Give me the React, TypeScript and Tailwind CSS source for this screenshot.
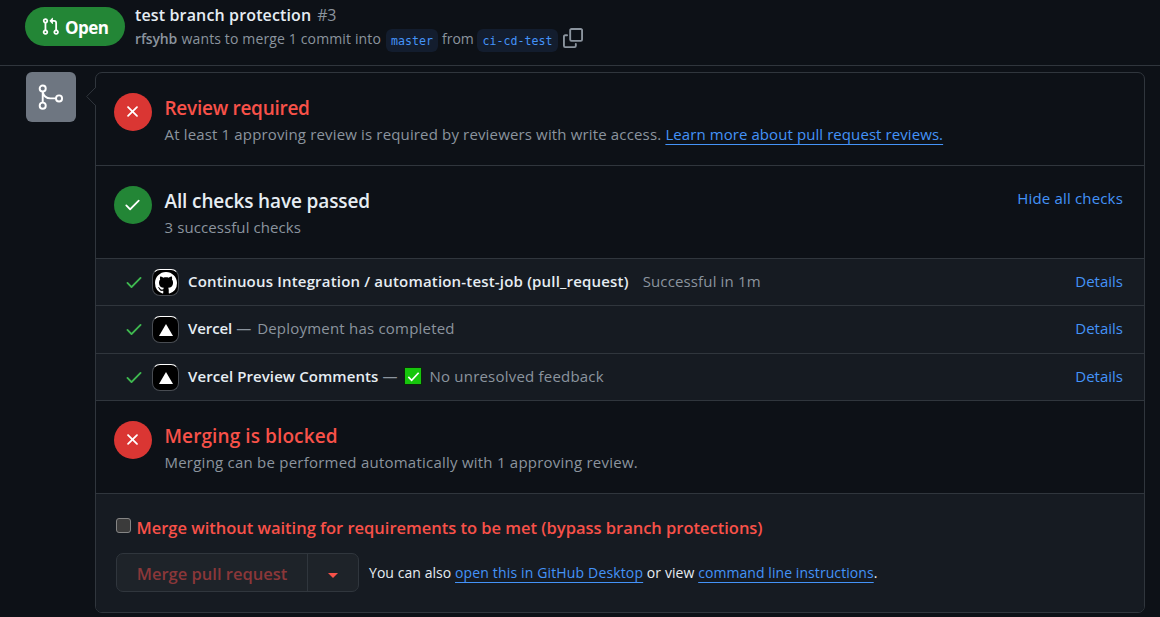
import type { ReactNode } from "react";

const CHECK =
  "M13.78 4.22a.75.75 0 0 1 0 1.06l-7.25 7.25a.75.75 0 0 1-1.06 0L2.22 9.28a.751.751 0 0 1 .018-1.042.751.751 0 0 1 1.042-.018L6 10.94l6.72-6.72a.75.75 0 0 1 1.06 0Z";
const CROSS =
  "M3.72 3.72a.75.75 0 0 1 1.06 0L8 6.94l3.22-3.22a.749.749 0 0 1 1.275.326.749.749 0 0 1-.215.734L9.06 8l3.22 3.22a.749.749 0 0 1-.326 1.275.749.749 0 0 1-.734-.215L8 9.06l-3.22 3.22a.751.751 0 0 1-1.042-.018.751.751 0 0 1-.018-1.042L6.94 8 3.72 4.78a.75.75 0 0 1 0-1.06Z";
const PULL_REQUEST =
  "M1.5 3.25a2.25 2.25 0 1 1 3 2.122v5.256a2.251 2.251 0 1 1-1.5 0V5.372A2.25 2.25 0 0 1 1.5 3.25Zm5.677-.177L9.573.677A.25.25 0 0 1 10 .854V2.5h1A2.5 2.5 0 0 1 13.5 5v5.628a2.251 2.251 0 1 1-1.5 0V5a1 1 0 0 0-1-1h-1v1.646a.25.25 0 0 1-.427.177L7.177 3.427a.25.25 0 0 1 0-.354ZM3.75 2.5a.75.75 0 1 0 0 1.5.75.75 0 0 0 0-1.5Zm0 9.5a.75.75 0 1 0 0 1.5.75.75 0 0 0 0-1.5Zm8.25.75a.75.75 0 1 0 1.5 0 .75.75 0 0 0-1.5 0Z";
const COPY =
  "M0 6.75C0 5.784.784 5 1.75 5h1.5a.75.75 0 0 1 0 1.5h-1.5a.25.25 0 0 0-.25.25v7.5c0 .138.112.25.25.25h7.5a.25.25 0 0 0 .25-.25v-1.5a.75.75 0 0 1 1.5 0v1.5A1.75 1.75 0 0 1 9.25 16h-7.5A1.75 1.75 0 0 1 0 14.25Z M5 1.75C5 .784 5.784 0 6.75 0h7.5C15.216 0 16 .784 16 1.75v7.5A1.75 1.75 0 0 1 14.25 11h-7.5A1.75 1.75 0 0 1 5 9.25Zm1.75-.25a.25.25 0 0 0-.25.25v7.5c0 .138.112.25.25.25h7.5a.25.25 0 0 0 .25-.25v-7.5a.25.25 0 0 0-.25-.25Z";
const OCTOCAT =
  "M8 0c4.42 0 8 3.58 8 8a8.013 8.013 0 0 1-5.45 7.59c-.4.08-.55-.17-.55-.38 0-.27.01-1.13.01-2.2 0-.75-.25-1.23-.54-1.48 1.78-.2 3.65-.88 3.65-3.95 0-.88-.31-1.59-.82-2.15.08-.2.36-1.02-.08-2.12 0 0-.67-.22-2.2.82-.64-.18-1.32-.27-2-.27-.68 0-1.36.09-2 .27-1.53-1.03-2.2-.82-2.2-.82-.44 1.1-.16 1.92-.08 2.12-.51.56-.82 1.28-.82 2.15 0 3.06 1.86 3.75 3.64 3.95-.23.2-.44.55-.51 1.07-.46.21-1.61.55-2.33-.66-.15-.24-.6-.83-1.23-.82-.67.01-.27.38.01.53.34.19.73.9.82 1.13.16.45.68 1.31 2.69.94 0 .67.01 1.3.01 1.49 0 .21-.15.45-.55.38A7.995 7.995 0 0 1 0 8c0-4.42 3.58-8 8-8Z";

function Icon({ d, className }: { d: string; className: string }) {
  return (
    <svg viewBox="0 0 16 16" fill="currentColor" className={`block shrink-0 ${className}`}>
      <path d={d} />
    </svg>
  );
}

function Link({ children, className = "" }: { children: ReactNode; className?: string }) {
  return (
    <a
      href="#"
      className={`text-[#4493f8] underline decoration-1 underline-offset-[4px] [text-decoration-skip-ink:none] ${className}`}
    >
      {children}
    </a>
  );
}

function Branch({ name, width }: { name: string; width: string }) {
  return (
    <span
      className={`ml-[4px] flex h-[23px] items-center justify-center rounded-[6px] bg-[#131d2e] font-['DejaVu_Sans_Mono',monospace] text-[11.6px] text-[#4493f8] ${width}`}
    >
      {name}
    </span>
  );
}

function StatusSection({
  ok = false,
  title,
  titleClass,
  children,
  action,
}: {
  ok?: boolean;
  title: string;
  titleClass: string;
  children: ReactNode;
  action?: ReactNode;
}) {
  return (
    <section className="flex h-[93px] items-start border-b border-[#30363d] pr-[21px] pl-[18px]">
      <span
        className={`mt-5 flex size-[38px] shrink-0 items-center justify-center rounded-full pr-px pb-px text-white ${ok ? "bg-[#238636]" : "bg-[#da3633]"}`}
      >
        <Icon d={ok ? CHECK : CROSS} className="size-[19px]" />
      </span>
      <div className="mt-[23px] ml-[12.5px] flex grow flex-col gap-[2px]">
        <h3 className={`text-[19px] leading-6 font-semibold ${titleClass}`}>{title}</h3>
        <p className="text-[15px] leading-6 text-[#8b949e]">{children}</p>
      </div>
      {action}
    </section>
  );
}

function CheckRow({ height, github = false, children }: { height: string; github?: boolean; children: ReactNode }) {
  return (
    <div className={`flex items-start border-b border-[#30363d] bg-[#161b22] pr-[21px] pl-[28px] ${height}`}>
      <Icon d={CHECK} className="mt-[13px] size-[20px] text-[#3fb950]" />
      <span className="mt-[10px] ml-2 flex size-[27px] shrink-0 items-center justify-center overflow-hidden rounded-[8px] border border-[#484c52] border-t-white bg-black text-white">
        {github ? (
          <Icon d={OCTOCAT} className="mt-px size-[22px]" />
        ) : (
          <svg viewBox="0 0 14 12" className="block h-[12px] w-[14px]" fill="currentColor">
            <path d="M7 0 14 12H0Z" />
          </svg>
        )}
      </span>
      <div className="mt-[10px] ml-[9px] flex grow items-baseline text-[15px] leading-6 whitespace-pre text-[#8b949e]">
        {children}
      </div>
      <a href="#" className="mt-[10px] text-[15px] leading-6 text-[#4493f8]">
        Details
      </a>
    </div>
  );
}

export default function App() {
  return (
    <div className="h-[617px] w-[1160px] overflow-hidden bg-[#0d1117] font-['Open_Sans','Noto_Sans',sans-serif] text-[#e6edf3]">
      <header className="flex h-[66px] items-start border-b border-[#30363d] pl-[25px]">
        <div className="mt-[7px] flex h-[39px] w-[100px] shrink-0 items-center rounded-full bg-[#238636] pl-4 text-white">
          <Icon d={PULL_REQUEST} className="size-[19px]" />
          <span className="mt-[3px] ml-[5px] text-[17px] leading-6 font-bold tracking-[-0.5px]">Open</span>
        </div>
        <div className="mt-[5px] ml-[10px] flex flex-col">
          <div className="flex h-5 items-baseline gap-[6px] text-[16px] leading-5">
            <h1 className="font-semibold tracking-[0.14px]">test branch protection</h1>
            <span className="tracking-[-0.5px] text-[#8b949e]">#3</span>
          </div>
          <div className="mt-[4px] flex items-start text-[14px] leading-5 whitespace-nowrap text-[#8b949e]">
            <span className="w-[46.5px] font-semibold tracking-[-0.15px]">rfsyhb</span>
            <span className="w-[200.5px] tracking-[0.14px]">wants to merge 1 commit into</span>
            <Branch name="master" width="w-[52px]" />
            <span className="ml-[4px] w-[31px]">from</span>
            <Branch name="ci-cd-test" width="w-[81px]" />
            <Icon d={COPY} className="-mt-px ml-[5px] size-5" />
          </div>
        </div>
      </header>

      <main className="flex items-start pt-[6px] pl-[26px]">
        <div className="flex size-[50px] shrink-0 items-center justify-center rounded-[6px] bg-[#6e7681] text-white">
          <svg viewBox="0 0 24 24" className="size-[28px]" fill="none" stroke="currentColor" strokeWidth="1.65">
            <circle cx="4.9" cy="4.75" r="2.6" />
            <circle cx="4.9" cy="19.4" r="2.6" />
            <circle cx="18.9" cy="13.2" r="2.6" />
            <path d="M4.9 7.35v9.45M4.9 7.35C5.2 10.6 8 13.2 11.5 13.2h4.8" />
          </svg>
        </div>

        <div className="relative ml-[19px] h-[541px] w-[1050px]">
          <div className="h-full overflow-hidden rounded-[7px] border border-[#30363d]">
            <StatusSection title="Review required" titleClass="text-[#f85149] tracking-[-0.27px]">
              <span className="tracking-[0.153px]">
                At least 1 approving review is required by reviewers with write access.{" "}
              </span>
              <Link className="tracking-[0.08px]">Learn more about pull request reviews.</Link>
            </StatusSection>
            <StatusSection
              ok
              title="All checks have passed"
              titleClass="tracking-[-0.13px]"
              action={
                <a href="#" className="mt-5 text-[15px] leading-6 tracking-[0.17px] text-[#4493f8]">
                  Hide all checks
                </a>
              }
            >
              <span className="tracking-[0.09px]">3 successful checks</span>
            </StatusSection>

            <CheckRow height="h-[47px]" github>
              <b className="font-semibold tracking-[0.18px] text-[#e6edf3]">
                Continuous Integration / automation-test-job (pull_request)
              </b>
              <span className="ml-[14px] tracking-[0.14px]">Successful in 1m</span>
            </CheckRow>
            <CheckRow height="h-[48px]">
              <b className="font-semibold tracking-[-0.1px] text-[#e6edf3]">Vercel</b>
              <span className="ml-[4px]">—</span>
              <span className="ml-[6px] tracking-[0.21px]">Deployment has completed</span>
            </CheckRow>
            <CheckRow height="h-[47px]">
              <b className="font-semibold tracking-[0.08px] text-[#e6edf3]">Vercel Preview Comments</b>
              <span className="ml-[4px]">—</span>
              <span className="ml-[7px] flex size-[18px] items-center justify-center self-center border border-[#0b2a0b] bg-[#16c60c] text-white">
                <svg viewBox="0 0 16 16" className="size-[15px]" fill="none" stroke="currentColor" strokeWidth="1.8">
                  <path d="M2.5 8.5 6 12l7.5-8" />
                </svg>
              </span>
              <span className="ml-[7px] tracking-[0.21px]">No unresolved feedback</span>
            </CheckRow>

            <StatusSection title="Merging is blocked" titleClass="text-[#f85149] tracking-[0.1px]">
              <span className="tracking-[0.23px]">
                Merging can be performed automatically with 1 approving review.
              </span>
            </StatusSection>

            <div className="flex h-[118px] flex-col bg-[#161b22] pt-[22px] pl-5">
              <label className="flex items-start">
                <input
                  type="checkbox"
                  className="mt-[2px] size-[15px] appearance-none rounded-[3px] border border-[#858585] bg-[#3b3b3b]"
                />
                <span className="ml-[5.5px] text-[16.5px] leading-6 font-semibold tracking-[-0.013px] text-[#f85149]">
                  Merge without waiting for requirements to be met (bypass branch protections)
                </span>
              </label>
              <div className="mt-[13px] flex items-center">
                <div className="flex h-[39px] w-[243px] overflow-hidden rounded-[7px] border border-[#30363d] bg-[#1e2329]">
                  <button
                    type="button"
                    className="flex w-[191px] items-center justify-center border-r border-[#30363d] pt-[2px] text-[16.5px] leading-6 font-semibold text-[#8b3739]"
                  >
                    Merge pull request
                  </button>
                  <button type="button" className="flex grow items-center justify-center text-[#f85149]">
                    <svg viewBox="0 0 10 5" className="mt-[5px] h-[5px] w-[10px]" fill="currentColor">
                      <path d="M0 0H10L5 5Z" />
                    </svg>
                  </button>
                </div>
                <p className="ml-[10px] text-[14px] leading-5 whitespace-nowrap">
                  <span className="tracking-[0.06px]">You can also </span>
                  <Link className="tracking-[0.15px]">open this in GitHub Desktop</Link>
                  <span className="tracking-[0.08px]"> or view </span>
                  <Link className="tracking-[0.07px]">command line instructions</Link>.
                </p>
              </div>
            </div>
          </div>
          <svg viewBox="0 0 10 20" className="absolute top-[15px] -left-[9px] h-5 w-[10px]">
            <path d="M10 0.5 0.7 9.5 10 18.5Z" fill="#0d1117" />
            <path d="M9.5 0.5 0.7 9.5 9.5 18.5" fill="none" stroke="#30363d" />
          </svg>
        </div>
      </main>
    </div>
  );
}
